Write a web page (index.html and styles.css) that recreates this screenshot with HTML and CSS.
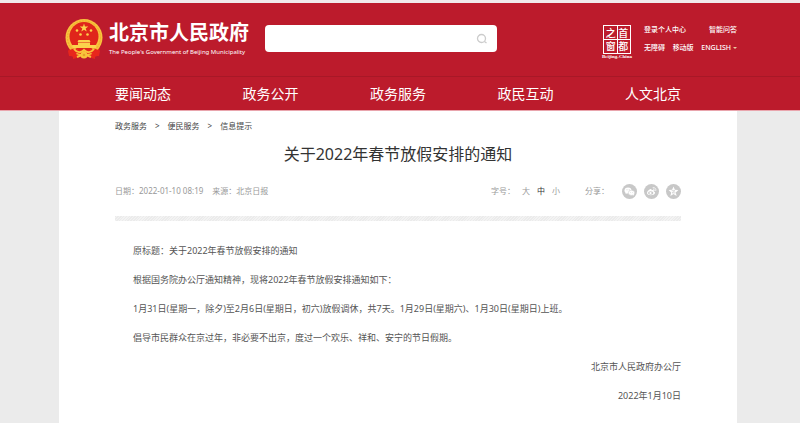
FILE: index.html
```html
<!DOCTYPE html>
<html lang="zh-CN">
<head>
<meta charset="utf-8">
<meta name="viewport" content="width=device-width, initial-scale=1">
<title>关于2022年春节放假安排的通知</title>
<link rel="stylesheet" href="styles.css">
</head>
<body>
<header class="site-header">
  <div class="wrap masthead">
    <a class="brand" href="#">
      <svg class="emblem" viewBox="0 0 40 42" aria-hidden="true">
        <path d="M6 30l-2 3 1 5 4 0 0 3 7-2 4 1 4-1 7 2 0-3 4 0 1-5-2-3z" fill="#e8261c"/>
        <circle cx="20" cy="19.500" r="18.500" fill="#f8c33c"/>
        <circle cx="20" cy="19.500" r="16.500" fill="none" stroke="#eeaa2e" stroke-width="1" stroke-dasharray="2 1"/>
        <circle cx="20" cy="18.500" r="14.500" fill="#e0251b"/>
        <path d="M20 5.500l1 3.100h3.300l-2.600 1.900 1 3.100-2.700-1.900-2.700 1.900 1-3.100-2.600-1.900H19z" fill="#fbd34c"/>
        <g fill="#fbd34c"><circle cx="13" cy="12.500" r="1.300"/><circle cx="27" cy="12.500" r="1.300"/><circle cx="16.500" cy="16.500" r="1.300"/><circle cx="23.500" cy="16.500" r="1.300"/>
        <path d="M14.500 22h11l1 2h-13zM14 24.500h12V27H14zM8 27h24v3H9z"/></g>
        <path d="M5 33c4-4 8-1 10-2l5 3 5-3c2 1 6-2 10 2l-3 6-5-4-7 2-7-2-5 4z" fill="#e8261c"/>
        <path d="M10 31c3 4 7 4 10 1 3 3 7 3 10-1M13 39l7-3 7 3" fill="none" stroke="#f8c33c" stroke-width="2"/>
        <circle cx="20" cy="37" r="3.500" fill="#f8c33c"/><circle cx="20" cy="37" r="1.300" fill="#e5a02a"/>
      </svg>
      <span class="brand-text">
        <span class="brand-cn">北京市人民政府</span>
        <span class="brand-en">The People's Government of Beijing Municipality</span>
      </span>
    </a>
    <form class="search">
      <input class="search-input" type="search" aria-label="搜索">
      <button class="search-button" type="button" aria-label="搜索">
        <svg viewBox="0 0 12 12" aria-hidden="true"><circle cx="5.500" cy="5.500" r="4" fill="none" stroke="#ccc" stroke-width="1.300"/><path d="M8.500 8.500l2 1.500" stroke="#ccc" stroke-width="1.300"/></svg>
      </button>
    </form>
    <a class="capital" href="#">
      <span class="seal"><span>之</span><span>首</span><span>窗</span><span>都</span></span>
      <span class="seal-caption">Beijing-China</span>
    </a>
    <div class="tools">
      <div class="tools-row"><a href="#">登录个人中心</a><a href="#">智能问答</a></div>
      <div class="tools-row"><a href="#">无障碍</a><a href="#">移动版</a><a class="english" href="#">ENGLISH</a></div>
    </div>
  </div>
  <nav class="main-nav">
    <div class="wrap nav-list">
      <a href="#">要闻动态</a><a href="#">政务公开</a><a href="#">政务服务</a><a href="#">政民互动</a><a href="#">人文北京</a>
    </div>
  </nav>
</header>
<main class="page">
  <article class="wrap article">
    <nav class="crumbs" aria-label="位置">
      <a href="#">政务服务</a><span>&gt;</span><a href="#">便民服务</a><span>&gt;</span><a href="#">信息提示</a>
    </nav>
    <h1 class="title">关于2022年春节放假安排的通知</h1>
    <div class="meta">
      <span>日期：2022-01-10 08:19</span>
      <span>来源：北京日报</span>
      <div class="sizes"><span class="sizes-label">字号：</span><button type="button">大</button><button class="current" type="button">中</button><button type="button">小</button></div>
      <div class="share">
        <span class="share-label">分享：</span>
        <button type="button" aria-label="微信"><svg viewBox="0 0 15 15"><circle cx="7.500" cy="7.500" r="7.500" fill="#c8c8c8"/><ellipse cx="6" cy="6.500" rx="3.500" ry="3" fill="#fff"/><path d="M4 8l-.5 2 2-1z" fill="#fff"/><ellipse cx="9.500" cy="8.800" rx="3.200" ry="2.600" fill="#fff" stroke="#c8c8c8" stroke-width=".5"/><path d="M10.500 10.500l1.500 1.300-.2-2z" fill="#fff"/><g fill="#c8c8c8"><circle cx="5" cy="5.700" r=".5"/><circle cx="7.200" cy="5.700" r=".5"/><circle cx="8.600" cy="8.300" r=".4"/><circle cx="10.500" cy="8.300" r=".4"/></g></svg></button>
        <button type="button" aria-label="微博"><svg viewBox="0 0 15 15"><circle cx="7.500" cy="7.500" r="7.500" fill="#c8c8c8"/><path d="M6.500 5C4.500 5.500 3 7.500 3 9c0 3 7.500 3 8 0 .2-1-.5-1.300-1.200-1.600.4-1.500-.8-1.700-2.300-1.100C7.700 5.300 7.300 4.900 6.500 5z" fill="#fff"/><ellipse cx="6.700" cy="9" rx="2.700" ry="1.700" fill="#c8c8c8"/><circle cx="6.500" cy="9.100" r="1.100" fill="#fff"/><path d="M8.700 3.700c2.200-.5 3.700 1.200 3 3.200M9 5.200c1.100-.1 1.600.6 1.300 1.500" fill="none" stroke="#fff" stroke-width=".8"/></svg></button>
        <button type="button" aria-label="QQ空间"><svg viewBox="0 0 15 15"><circle cx="7.500" cy="7.500" r="7.500" fill="#c8c8c8"/><path d="M7.500 2.500l1.400 3.200 3.500.4-2.600 2.300.8 3.500-3.100-1.800-3.100 1.800.8-3.500-2.600-2.300 3.500-.4z" fill="#fff"/><path d="M5.700 6.700h3.200L6.200 8.900h3.400" fill="none" stroke="#c8c8c8" stroke-width=".7"/></svg></button>
      </div>
    </div>
    <div class="divider"></div>
    <div class="body">
      <p>原标题：关于2022年春节放假安排的通知</p>
      <p>根据国务院办公厅通知精神，现将2022年春节放假安排通知如下：</p>
      <p>1月31日(星期一，除夕)至2月6日(星期日，初六)放假调休，共7天。1月29日(星期六)、1月30日(星期日)上班。</p>
      <p>倡导市民群众在京过年，非必要不出京，度过一个欢乐、祥和、安宁的节日假期。</p>
      <p class="signed">北京市人民政府办公厅</p>
      <p class="signed">2022年1月10日</p>
    </div>
  </article>
</main>
</body>
</html>
```
FILE: styles.css
```css
* { box-sizing: border-box; }
html { height: 100%; }
body {
  margin: 0;
  min-height: 100%;
  display: flex;
  flex-direction: column;
  background: #ebebeb;
  color: #555;
  font: 9px/12px "Noto Sans", "Noto Sans CJK SC", sans-serif;
}
a { color: inherit; text-decoration: none; }
button { border: 0; padding: 0; background: none; color: inherit; font: inherit; cursor: pointer; }
svg { display: block; width: 100%; }
.wrap { width: 100%; max-width: 678px; margin: 0 auto; }

.site-header { padding-right: 4px; background: #bc1b2c; color: #fff; border-top: 3px solid #f1e9ea; border-bottom: 1px solid #e9a5ad; }
.masthead { display: flex; align-items: flex-start; height: 73px; padding: 15px 0 0 5px; }
.brand { display: flex; gap: 5px; }
.emblem { width: 40px; height: 42px; flex: none; }
.brand-text { display: flex; flex-direction: column; width: 140px; padding-top: 2px; white-space: nowrap; }
.brand-cn { font-size: 20px; line-height: 26px; font-weight: 700; }
.brand-en { font-size: 6px; line-height: 12px; }
.search { display: flex; width: 232px; height: 27px; margin: 7px 0 0 16px; background: #fff; border-radius: 4px; }
.search-input { flex: 1; min-width: 0; border: 0; background: none; outline: 0; padding: 0 8px; font: inherit; }
.search-button { width: 12px; margin-right: 9px; }
.capital { display: flex; flex-direction: column; align-items: center; width: 32px; margin: 7px 11px 0 auto; }
.seal { display: grid; grid-template-columns: 1fr 1fr; gap: 1px; width: 28px; padding: 1px; border: 1px solid #fff; background: linear-gradient(#fff, #fff) center / 1px 100% no-repeat, linear-gradient(#fff, #fff) center / 100% 1px no-repeat; }
.seal span { font-size: 10px; line-height: 12px; font-weight: 500; text-align: center; }
.seal-caption { font: 700 5px/6px "Liberation Serif", serif; }
.tools { display: flex; flex-direction: column; gap: 8px; width: 93px; padding-top: 7px; font-size: 7px; line-height: 10px; font-weight: 500; white-space: nowrap; }
.tools-row { display: flex; justify-content: space-between; }
.english::after { content: ""; display: inline-block; margin-left: 2px; border: 2px solid transparent; border-top-color: #e9c9a0; border-bottom: 0; vertical-align: middle; }
.main-nav { margin-right: -4px; padding-right: 4px; border-top: 1px solid #a81827; font-size: 14px; line-height: 33px; }
.nav-list { display: flex; justify-content: space-between; padding: 0 56px; }

.page { flex: 1; display: flex; padding-right: 4px; }
.article { background: #fff; padding: 9px 56px 0; }
.crumbs { display: flex; gap: 8px; font-size: 8px; color: #444; }
.title { margin: 10px 0 0; font-size: 16px; line-height: 24px; font-weight: 400; text-align: center; color: #333; }
.meta { display: flex; align-items: center; gap: 9px; margin-top: 17px; height: 16px; font-size: 8px; color: #999; }
.sizes { display: flex; margin-left: auto; gap: 7px; }
.sizes .current { color: #333; }
.share { display: flex; align-items: center; gap: 7px; margin-left: 16px; }
.share-label { margin-right: 6px; }
.share button { width: 15px; }
.divider { height: 5px; margin: 17px 0 15px; background: repeating-linear-gradient(135deg, #ebebeb 0 1px, #f3f3f3 1px 2px); }
.body p { margin: 0; line-height: 29px; text-indent: 2em; }
.body .signed { text-align: right; }
```
